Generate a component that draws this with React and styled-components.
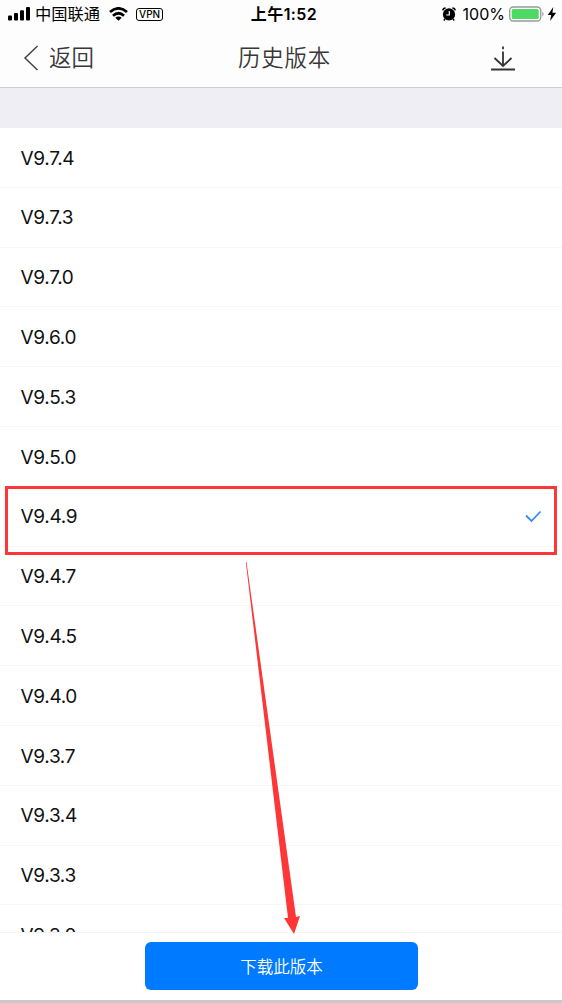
import React from "react";
import styled, { createGlobalStyle } from "styled-components";

const versions = [
  "9.7.4", "9.7.3", "9.7.0", "9.6.0", "9.5.3", "9.5.0", "9.4.9",
  "9.4.7", "9.4.5", "9.4.0", "9.3.7", "9.3.4", "9.3.3", "9.3.0",
];

const GlobalStyle = createGlobalStyle`
  * { box-sizing: border-box; }
  body {
    margin: 0;
    background: #fff;
    font-family: Inter, "Noto Sans CJK SC", sans-serif;
  }
`;

const Screen = styled.div`
  position: relative;
  display: flex;
  flex-direction: column;
  width: 562px;
  height: 1003px;
  overflow: hidden;
  background: #fff;
`;

const StatusBar = styled.div`
  display: grid;
  grid-template-columns: 1fr auto 1fr;
  align-items: center;
  height: 28px;
  padding: 0 5px 0 8px;
  background: #fdfdfd;
  color: #000;
  font-size: 16.3px;
  line-height: 28px;
  white-space: nowrap;
`;

const StatusGroup = styled.div`
  display: flex;
  align-items: center;
  justify-content: ${(p) => (p.$end ? "flex-end" : "flex-start")};
`;

const Carrier = styled.span`
  margin: 0 9px 0 4px;
`;

const Vpn = styled.span`
  width: 27px;
  height: 13px;
  margin-left: 8px;
  border: 1px solid #000;
  border-radius: 3px;
  font-size: 10px;
  font-weight: 500;
  line-height: 11px;
  text-align: center;
`;

const Clock = styled.span`
  padding-left: 3px;
  font-weight: 600;
  font-size: 16px;
  letter-spacing: 0.4px;
`;

const Percent = styled.span`
  margin: 0 4px 0 7px;
  font-size: 16px;
`;

const Bolt = styled.svg`
  margin-left: 2px;
`;

const NavBar = styled.header`
  display: grid;
  grid-template-columns: 1fr auto 1fr;
  align-items: center;
  height: 60px;
  padding: 0 46px 0 23px;
  border-bottom: 1px solid #cdcdd0;
  background: #fdfdfd;
  color: #383838;
  font-size: 22.5px;
  font-weight: 350;
`;

const Back = styled.div`
  display: flex;
  align-items: center;
  gap: 10px;
`;

const BackLabel = styled.span`
  padding-bottom: 3px;
`;

const Title = styled.div`
  padding: 0 0 3px 29px;
  margin-right: -1px;
  letter-spacing: 0.7px;
`;

const DownloadIcon = styled.svg`
  justify-self: end;
`;

const Spacer = styled.div`
  flex: none;
  height: 40px;
  background: #efeef4;
`;

const List = styled.main`
  height: 804px;
  overflow: hidden;
`;

const Row = styled.div`
  display: flex;
  align-items: center;
  justify-content: space-between;
  height: 59.8px;
  padding: 1.4px 20px 0 20.5px;
  border-bottom: 1px solid #f7f7f7;
  color: #111;
  font-size: 19px;
  letter-spacing: -0.33px;
  line-height: 25px;
`;

const Footer = styled.footer`
  display: flex;
  justify-content: center;
  height: 68px;
  padding: 9.4px 0 0 1px;
  border-top: 1px solid #f4f4f4;
`;

const DownloadButton = styled.button`
  width: 273px;
  height: 47.6px;
  padding: 0 0 1px;
  border: 0;
  border-radius: 6px;
  background: #007aff;
  color: #fff;
  font: 350 16.5px Inter, "Noto Sans CJK SC", sans-serif;
`;

const BottomEdge = styled.div`
  flex: none;
  height: 3px;
  background: #c9c9c9;
`;

const Highlight = styled.div`
  position: absolute;
  left: 5px;
  top: 486px;
  width: 552px;
  height: 69px;
  border: 3px solid #fd3638;
`;

const Arrow = styled.svg`
  position: absolute;
  left: 240px;
  top: 560px;
`;

export default function App() {
  return (
    <Screen>
      <GlobalStyle />
      <StatusBar>
        <StatusGroup>
          <svg width="23" height="14" viewBox="0 0 23 14">
            <rect x="0" y="8.5" width="4" height="5" rx="1" />
            <rect x="6" y="6" width="4" height="7.5" rx="1" />
            <rect x="12" y="3.2" width="4" height="10.3" rx="1" />
            <rect x="18" y="0" width="4" height="13.5" rx="1" />
          </svg>
          <Carrier>中国联通</Carrier>
          <svg width="19" height="14" viewBox="0 0 19 14">
            <g fill="none" stroke="#000" strokeWidth="2.8">
              <path d="M1 5Q9.5 -2.2 18 5" />
              <path d="M4 8.7Q9.5 3.9 15 8.7" />
            </g>
            <path d="M6.3 10.7Q9.5 8.4 12.7 10.7L9.5 13.8Z" />
          </svg>
          <Vpn>VPN</Vpn>
        </StatusGroup>
        <Clock>上午1:52</Clock>
        <StatusGroup $end>
          <svg width="14" height="14" viewBox="0 0 14 14">
            <circle cx="7" cy="7.4" r="6.1" />
            <path d="M0.8 3.4A3 3 0 0 1 3.6 0.9M10.4 0.9A3 3 0 0 1 13.2 3.4M3 12L1.8 13.4M11 12l1.2 1.4" fill="none" stroke="#000" strokeWidth="1.5" />
            <path d="M7.3 4V8H4.2" fill="none" stroke="#fff" strokeWidth="1.2" />
          </svg>
          <Percent>100%</Percent>
          <svg width="36" height="16" viewBox="0 0 36 16">
            <rect x="0.75" y="1" width="31" height="14" rx="3.5" fill="#fff" stroke="#999" strokeWidth="1.3" />
            <rect x="2.7" y="3" width="27" height="10" rx="1.5" fill="#4cd964" />
            <path d="M33.3 5.5Q36 8 33.3 10.5Z" fill="#999" />
          </svg>
          <Bolt width="10" height="14" viewBox="0 0 10 14">
            <path d="M6.3 0L0.8 8H4.2L3 14L9.2 5.7H5.4Z" />
          </Bolt>
        </StatusGroup>
      </StatusBar>
      <NavBar>
        <Back>
          <svg width="16" height="26" viewBox="0 0 16 26" fill="none" stroke="#444" strokeWidth="1.5">
            <path d="M14.5 1L2 13L14.5 25" />
          </svg>
          <BackLabel>返回</BackLabel>
        </Back>
        <Title>历史版本</Title>
        <DownloadIcon width="26" height="26" viewBox="0 0 26 26" fill="none" stroke="#333" strokeWidth="1.8">
          <path d="M13 1.5V4.3M13 6.5V21M4.5 13L13 21L21.5 13M1 24.5H25" />
        </DownloadIcon>
      </NavBar>
      <Spacer />
      <List>
        {versions.map((version) => (
          <Row key={version}>
            <span>V{version}</span>
            {version === "9.4.9" && (
              <svg width="18" height="14" viewBox="0 0 18 14" fill="none" stroke="#2e8df6" strokeWidth="1.8">
                <path d="M2 5.5L7.5 11L16.5 1.5" />
              </svg>
            )}
          </Row>
        ))}
      </List>
      <Footer>
        <DownloadButton>下载此版本</DownloadButton>
      </Footer>
      <BottomEdge />
      <Highlight />
      <Arrow width="64" height="376" viewBox="0 0 64 376">
        <path d="M5.8 2L6.5 2L56 357L60 356L54 374L44 358L48 358Z" fill="#fd3638" />
      </Arrow>
    </Screen>
  );
}
